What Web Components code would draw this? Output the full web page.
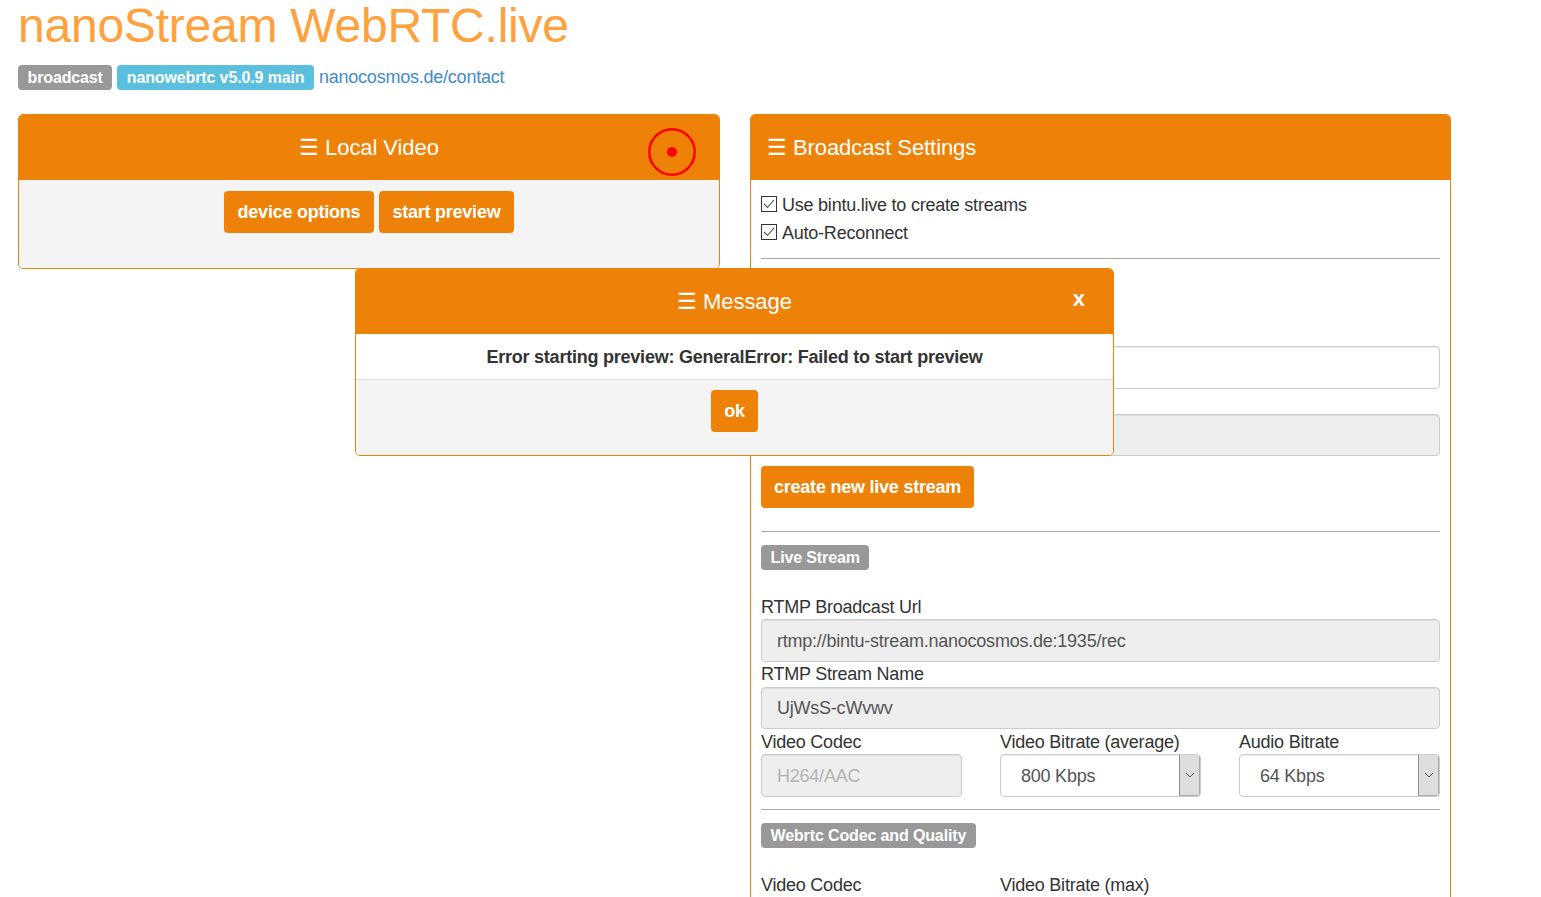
<!DOCTYPE html>
<html>
<head>
<meta charset="utf-8">
<title>nanoStream WebRTC.live</title>
<style>
html, body { margin: 0; height: 897px; overflow: hidden; background: #fff; }
body { font-family: "Liberation Sans", Arial, sans-serif; font-size: 18px; letter-spacing: -0.23px; color: #333; position: relative; }
</style>
</head>
<body>
<ns-page>
  <ns-header slot="header"></ns-header>
  <ns-panel slot="left" heading="Local Video" centered muted>
    <ns-record slot="tools"></ns-record>
    <div style="display:flex;justify-content:center;align-items:flex-start;gap:5px;height:68px;padding-top:1px;box-sizing:border-box">
      <ns-button>device options</ns-button>
      <ns-button>start preview</ns-button>
    </div>
  </ns-panel>
  <ns-panel slot="right" heading="Broadcast Settings">
    <ns-settings></ns-settings>
  </ns-panel>
</ns-page>
<ns-modal heading="Message" text="Error starting preview: GeneralError: Failed to start preview"></ns-modal>

<script>
const ORANGE = "#ee8208";

// ---- small bits ----
class NsButton extends HTMLElement {
  constructor() {
    super();
    this.attachShadow({ mode: "open" }).innerHTML = `
    <style>
    :host { display: inline-block; }
    button {
      display: block; height: 42px; padding: 0 var(--btn-pad, 13.5px); border: 0; border-radius: 4px;
      background: ${ORANGE}; color: #fff; cursor: pointer; letter-spacing: -0.23px;
      font: bold 18px/42px "Liberation Sans", Arial, sans-serif;
    }
    </style>
    <button><slot></slot></button>`;
  }
}
customElements.define("ns-button", NsButton);

class NsBadge extends HTMLElement {
  constructor() {
    super();
    this.attachShadow({ mode: "open" }).innerHTML = `
    <style>
    :host { display: inline-block; background: #999; color: #fff; border-radius: 4px; letter-spacing: -0.13px;
      font: bold 16px/25px "Liberation Sans", Arial, sans-serif; padding: 0 9.5px; height: 25px; }
    :host([info]) { background: #5bc0de; }
    </style>
    <slot></slot>`;
  }
}
customElements.define("ns-badge", NsBadge);

class NsRecord extends HTMLElement {
  constructor() {
    super();
    this.attachShadow({ mode: "open" }).innerHTML = `
    <style>
    :host { display: block; width: 48px; height: 48px; }
    svg { display: block; }
    </style>
    <svg width="48" height="48" viewBox="0 0 48 48">
      <circle cx="24" cy="24" r="22.7" fill="none" stroke="#ff0000" stroke-width="2.5"/>
      <circle cx="24" cy="24" r="5" fill="#ff0000"/>
    </svg>`;
  }
}
customElements.define("ns-record", NsRecord);

class NsCheck extends HTMLElement {
  constructor() {
    super();
    this.attachShadow({ mode: "open" }).innerHTML = `
    <style>
    :host { display: flex; align-items: center; height: 28px; gap: 5px; }
    svg { display: block; flex: none; margin-top: -2px; }
    </style>
    <svg width="16" height="16" viewBox="0 0 16 16">
      <rect x="0.5" y="0.5" width="15" height="15" fill="#fff" stroke="#333"/>
      <path d="M3 8 L6.5 11.5 L13 3.8" fill="none" stroke="#555" stroke-width="1.1"/>
    </svg>
    <span><slot></slot></span>`;
  }
}
customElements.define("ns-check", NsCheck);

class NsField extends HTMLElement {
  constructor() {
    super();
    const label = this.getAttribute("label");
    const value = this.getAttribute("value") || "";
    this.attachShadow({ mode: "open" }).innerHTML = `
    <style>
    :host { display: block; }
    label { display: block; height: var(--label-h, 25px); line-height: 25px; }
    .box {
      box-sizing: border-box; height: var(--box-h, 43px); padding: 0 15px; border: 1px solid #ccc; border-radius: 4px;
      line-height: var(--box-lh, 41px); color: #555; background: #fff;
      box-shadow: inset 0 1px 1px rgba(0,0,0,.075);
      white-space: nowrap; overflow: hidden;
    }
    :host([disabled]) .box { background: #eee; }
    :host([faded]) .box { color: #b4b4b4; }
    </style>
    ${label ? `<label>${label}</label>` : ""}
    <div class="box">${value}</div>`;
  }
}
customElements.define("ns-field", NsField);

class NsSelect extends HTMLElement {
  constructor() {
    super();
    this.attachShadow({ mode: "open" }).innerHTML = `
    <style>
    :host { display: block; }
    label { display: block; height: var(--label-h, 25px); line-height: 25px; }
    .box {
      box-sizing: border-box; height: 43px; display: flex; border: 1px solid #ccc; border-radius: 4px;
      color: #555; background: #fff; overflow: hidden;
      box-shadow: inset 0 1px 1px rgba(0,0,0,.075);
    }
    .val { flex: 1; padding-left: 20px; line-height: var(--box-lh, 41px); }
    .arrow {
      box-sizing: border-box; width: 21px; background: #dedede; border-left: 1px solid #8f8f8f;
      border-right: 1px solid #aaa; border-bottom: 1px solid #aaa;
      display: flex; align-items: center; justify-content: center;
    }
    </style>
    <label>${this.getAttribute("label")}</label>
    <div class="box">
      <div class="val">${this.getAttribute("value")}</div>
      <div class="arrow">
        <svg width="10" height="6" viewBox="0 0 10 6"><path d="M1 1 L5 5 L9 1" fill="none" stroke="#555" stroke-width="1"/></svg>
      </div>
    </div>`;
  }
}
customElements.define("ns-select", NsSelect);

// ---- panels ----
class NsPanel extends HTMLElement {
  constructor() {
    super();
    this.attachShadow({ mode: "open" }).innerHTML = `
    <style>
    :host { display: block; box-sizing: border-box; border: 1px solid ${ORANGE}; border-radius: 5px; background: #fff; }
    header {
      height: 65px; background: ${ORANGE}; color: #fff; padding: 0 23px 0 16px; box-sizing: border-box;
      border-radius: 4px 4px 0 0;
      display: grid; grid-template-columns: auto 1fr; align-items: center;
      font-size: 22px; letter-spacing: -0.08px;
    }
    :host([centered]) header { grid-template-columns: 1fr auto 1fr; padding-left: 23px; }
    :host([centered]) .title { grid-column: 2; }
    .tools { align-self: start; justify-self: end; margin-top: 13px; }
    .body { padding: 10px; border-radius: 0 0 4px 4px; }
    :host([muted]) .body { background: #f4f4f4; }
    </style>
    <header><span class="title">☰ ${this.getAttribute("heading")}</span><div class="tools"><slot name="tools"></slot></div></header>
    <div class="body"><slot></slot></div>`;
  }
}
customElements.define("ns-panel", NsPanel);

class NsHeader extends HTMLElement {
  constructor() {
    super();
    this.attachShadow({ mode: "open" }).innerHTML = `
    <style>
    :host { display: block; }
    h1 { margin: 0; height: 65px; font: normal 48px/52px "Liberation Sans", Arial, sans-serif; letter-spacing: -0.23px; color: #ffa13d; }
    .tags { display: flex; align-items: center; gap: 5px; height: 25px; }
    a { color: #428bca; text-decoration: none; }
    </style>
    <h1>nanoStream WebRTC.live</h1>
    <div class="tags">
      <ns-badge>broadcast</ns-badge>
      <ns-badge info>nanowebrtc v5.0.9 main</ns-badge>
      <a href="#">nanocosmos.de/contact</a>
    </div>`;
  }
}
customElements.define("ns-header", NsHeader);

class NsPage extends HTMLElement {
  constructor() {
    super();
    this.attachShadow({ mode: "open" }).innerHTML = `
    <style>
    :host { display: block; padding: 0 90px 0 18px; }
    .cols { display: grid; grid-template-columns: 702px 701px; gap: 30px; margin-top: 24px; align-items: start; }
    </style>
    <slot name="header"></slot>
    <div class="cols">
      <slot name="left"></slot>
      <slot name="right"></slot>
    </div>`;
  }
}
customElements.define("ns-page", NsPage);

class NsSettings extends HTMLElement {
  constructor() {
    super();
    this.attachShadow({ mode: "open" }).innerHTML = `
    <style>
    :host { display: block; }
    hr { border: 0; border-top: 1px solid #aaa; margin: 0; }
    .row { display: grid; grid-template-columns: repeat(3, 201px); gap: 38px; margin-top: 1px; --label-h: 24px; --box-lh: 43px; }
    .two { display: grid; grid-template-columns: repeat(3, 201px); gap: 38px; line-height: 25px; height: 25px; }
    </style>
    <ns-check style="margin-top:1px">Use bintu.live to create streams</ns-check>
    <ns-check>Auto-Reconnect</ns-check>
    <hr style="margin-top:11px">
    <ns-field style="margin-top:87px"></ns-field>
    <ns-field disabled style="margin-top:25px;--box-h:42px"></ns-field>
    <ns-button style="margin-top:10px;display:block;width:max-content;--btn-pad:13px">create new live stream</ns-button>
    <hr style="margin-top:23px">
    <ns-badge style="margin-top:13px;display:block;width:max-content">Live Stream</ns-badge>
    <ns-field style="margin-top:25px;--label-h:24px;--box-lh:43px" disabled label="RTMP Broadcast Url" value="rtmp://bintu-stream.nanocosmos.de:1935/rec"></ns-field>
    <ns-field style="--box-h:42px" disabled label="RTMP Stream Name" value="UjWsS-cWvwv"></ns-field>
    <div class="row">
      <ns-field disabled faded label="Video Codec" value="H264/AAC"></ns-field>
      <ns-select label="Video Bitrate (average)" value="800 Kbps"></ns-select>
      <ns-select label="Audio Bitrate" value="64 Kbps"></ns-select>
    </div>
    <hr style="margin-top:12px">
    <ns-badge style="margin-top:13px;display:block;width:max-content">Webrtc Codec and Quality</ns-badge>
    <div class="two" style="margin-top:25px">
      <div>Video Codec</div>
      <div>Video Bitrate (max)</div>
    </div>`;
  }
}
customElements.define("ns-settings", NsSettings);

// message dialog lies over the page
class NsModal extends HTMLElement {
  constructor() {
    super();
    this.attachShadow({ mode: "open" }).innerHTML = `
    <style>
    :host {
      position: absolute; left: 355px; top: 268px; width: 759px; box-sizing: border-box;
      border: 1px solid ${ORANGE}; border-radius: 5px; background: #fff;
    }
    header {
      position: relative; height: 65px; background: ${ORANGE}; color: #fff; letter-spacing: -0.08px;
      border-radius: 4px 4px 0 0;
      display: flex; align-items: center; justify-content: center; font-size: 22px;
    }
    .x { position: absolute; right: 28px; top: 17px; font-weight: bold; font-size: 22px; line-height: 26px; }
    .msg { height: 45px; line-height: 46px; text-align: center; font-weight: bold; border-bottom: 1px solid #ddd; }
    .foot { background: #f4f4f4; height: 75px; padding-top: 10px; box-sizing: border-box; display: flex; justify-content: center; align-items: flex-start; border-radius: 0 0 4px 4px; }
    </style>
    <header><span>☰ ${this.getAttribute("heading")}</span><span class="x">x</span></header>
    <div class="msg">${this.getAttribute("text")}</div>
    <div class="foot"><ns-button>ok</ns-button></div>`;
  }
}
customElements.define("ns-modal", NsModal);
</script>
</body>
</html>
